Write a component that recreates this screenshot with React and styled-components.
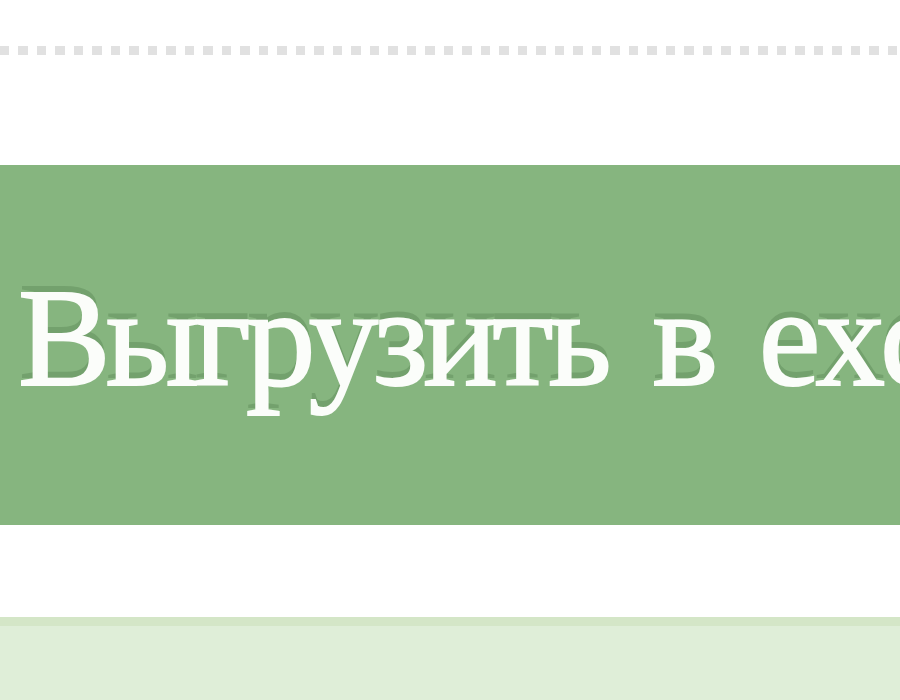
import React from 'react';
import styled, { createGlobalStyle } from 'styled-components';

const GlobalStyle = createGlobalStyle`
  html, body {
    margin: 0;
    padding: 0;
    background: #ffffff;
    overflow: hidden;
  }
`;

const Page = styled.div`
  width: 900px;
  height: 700px;
  display: flex;
  flex-direction: column;
  overflow: hidden;
`;

const DottedRule = styled.div`
  margin-top: 46px;
  height: 9px;
  background: repeating-linear-gradient(
    to right,
    #e1e1e1 0,
    #e1e1e1 9.25px,
    transparent 9.25px,
    transparent 18.5px
  );
`;

const ExportButton = styled.button`
  margin-top: 110px;
  height: 360px;
  width: 100%;
  flex-shrink: 0;
  border: none;
  padding: 0 0 14px 18px;
  display: flex;
  align-items: center;
  background: #86b57f;
  color: #fbfdfa;
  font-family: "Liberation Serif", "Times New Roman", serif;
  font-size: 139px;
  line-height: 1;
  letter-spacing: -5px;
  word-spacing: 16px;
  white-space: nowrap;
  overflow: hidden;
  -webkit-text-stroke: 2px #fbfdfa;
  text-shadow: 0 -7px 0 rgba(50, 90, 45, 0.22);
  cursor: pointer;
`;

const Notice = styled.div`
  margin-top: 92px;
  flex: 1;
  background: #dfeed8;
  border-top: 9px solid #d4e6c7;
`;

export default function App() {
  return (
    <Page>
      <GlobalStyle />
      <DottedRule />
      <ExportButton>Выгрузить в excel</ExportButton>
      <Notice />
    </Page>
  );
}
